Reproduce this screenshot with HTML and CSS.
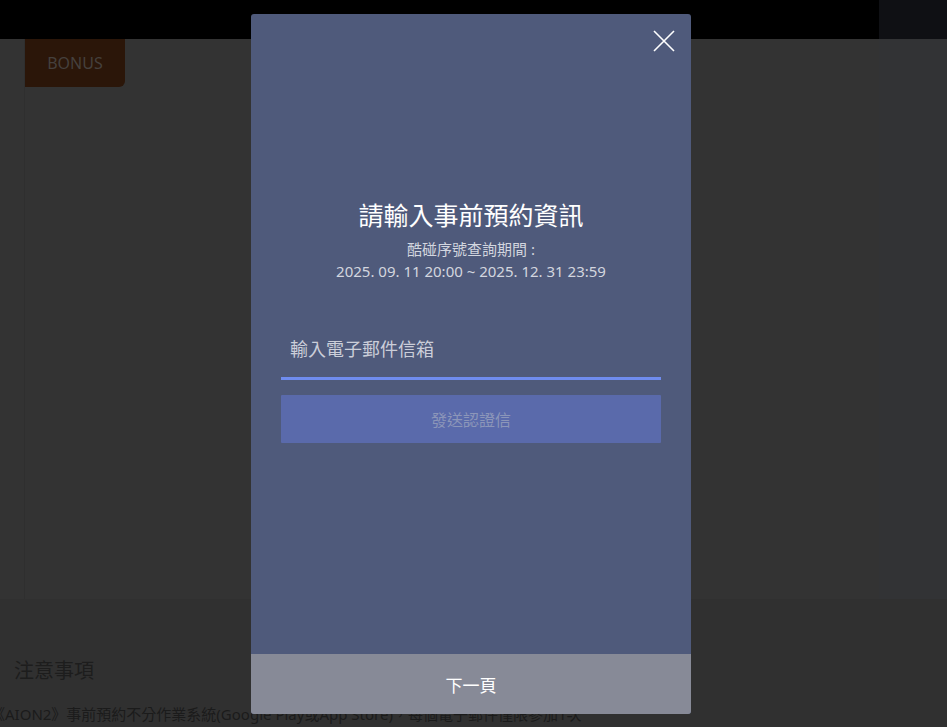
FILE: index.html
```html
<!DOCTYPE html>
<html lang="zh-Hant">
<head>
    <meta charset="UTF-8">
    <meta name="viewport" content="width=device-width, initial-scale=1.0">
    <title>AION2 事前預約</title>
    <link rel="stylesheet" href="styles.css">
</head>
<body>
    <header class="topbar">
        <div class="topbar-main"></div>
        <div class="topbar-side"></div>
    </header>

    <main>
        <section class="event">
            <div class="event-body">
                <div class="bonus-tab">BONUS</div>
            </div>
            <div class="event-side"></div>
        </section>

        <section class="notice">
            <h3>注意事項</h3>
            <ul class="notice-list">
                <li>《AION2》事前預約不分作業系統(Google Play或App Store)，每個電子郵件僅限參加1次</li>
            </ul>
        </section>
    </main>

    <!-- Pre-registration lookup popup -->
    <div class="modal">
        <button class="modal-close" aria-label="close">
            <svg width="22" height="22" viewBox="0 0 22 22">
                <path d="M1 1 L21 21 M21 1 L1 21" stroke="#fff" stroke-width="1.6" fill="none"/>
            </svg>
        </button>
        <div class="modal-body">
            <h2 class="modal-title">請輸入事前預約資訊</h2>
            <p class="modal-period">酷碰序號查詢期間 :<br>2025. 09. 11 20:00 ~ 2025. 12. 31 23:59</p>
            <input class="email-input" type="email" placeholder="輸入電子郵件信箱">
            <button class="send-btn">發送認證信</button>
        </div>
        <button class="next-btn">下一頁</button>
    </div>
</body>
</html>
```

FILE: styles.css
```css
body {
    margin: 0;
    padding: 0;
    font-family: "Noto Sans", "Noto Sans CJK TC", sans-serif;
    background-color: #303030;
    overflow: hidden;
    height: 727px;
}

.topbar {
    display: flex;
    height: 39px;
    background-color: #000;
}

.topbar-main {
    flex: 1;
}

.topbar-side {
    width: 68px;
    background-color: #0f1014;
}

.event {
    display: flex;
    height: 560px;
    background-color: #333;
}

.event-body {
    flex: 1;
    margin-left: 24px;
    border-left: 1px solid #2f2f2f;
}

.event-side {
    width: 68px;
    background-color: #323335;
}

.bonus-tab {
    width: 100px;
    height: 48px;
    line-height: 48px;
    text-align: center;
    background-color: #2b1609;
    color: #45403d;
    font-size: 16px;
    border-bottom-right-radius: 6px;
}

.notice {
    padding: 56px 0 0 14px;
}

.notice h3 {
    margin: 0;
    font-size: 20px;
    font-weight: normal;
    line-height: 32px;
    color: #1d1d1d;
}

.notice-list {
    list-style: none;
    margin: 16px 0 0 -24px;
    padding: 0;
    font-size: 15px;
    line-height: 22px;
    color: #1b1b1b;
}

.modal {
    position: absolute;
    top: 14px;
    left: 251px;
    width: 440px;
    height: 700px;
    display: flex;
    flex-direction: column;
    background-color: #4f5a7b;
    border-radius: 3px;
    overflow: hidden;
}

.modal-close {
    position: absolute;
    top: 16px;
    right: 16px;
    padding: 0;
    border: none;
    background: none;
    cursor: pointer;
}

.modal-close svg {
    display: block;
}

.modal-body {
    flex: 1;
    padding: 183px 30px 0;
    text-align: center;
}

.modal-title {
    margin: 0;
    font-size: 25px;
    font-weight: normal;
    line-height: 36px;
    color: #fff;
}

.modal-period {
    margin: 5px 0 0;
    font-size: 15px;
    line-height: 22px;
    color: #d3d6df;
}

.email-input {
    display: block;
    box-sizing: border-box;
    width: 100%;
    height: 59px;
    margin-top: 39px;
    padding: 0 9px;
    border: none;
    border-bottom: 3px solid #6f8cef;
    background: transparent;
    font-family: inherit;
    font-size: 18px;
    color: #fff;
    outline: none;
}

.email-input::placeholder {
    color: #cbced9;
}

.send-btn {
    display: block;
    width: 100%;
    height: 48px;
    margin-top: 15px;
    border: none;
    border-radius: 1px;
    background-color: #5a6aab;
    font-family: inherit;
    font-size: 16px;
    color: #8c96b9;
    cursor: pointer;
}

.next-btn {
    height: 60px;
    border: none;
    background-color: #878a97;
    font-family: inherit;
    font-size: 17px;
    color: #fff;
    cursor: pointer;
}
```
